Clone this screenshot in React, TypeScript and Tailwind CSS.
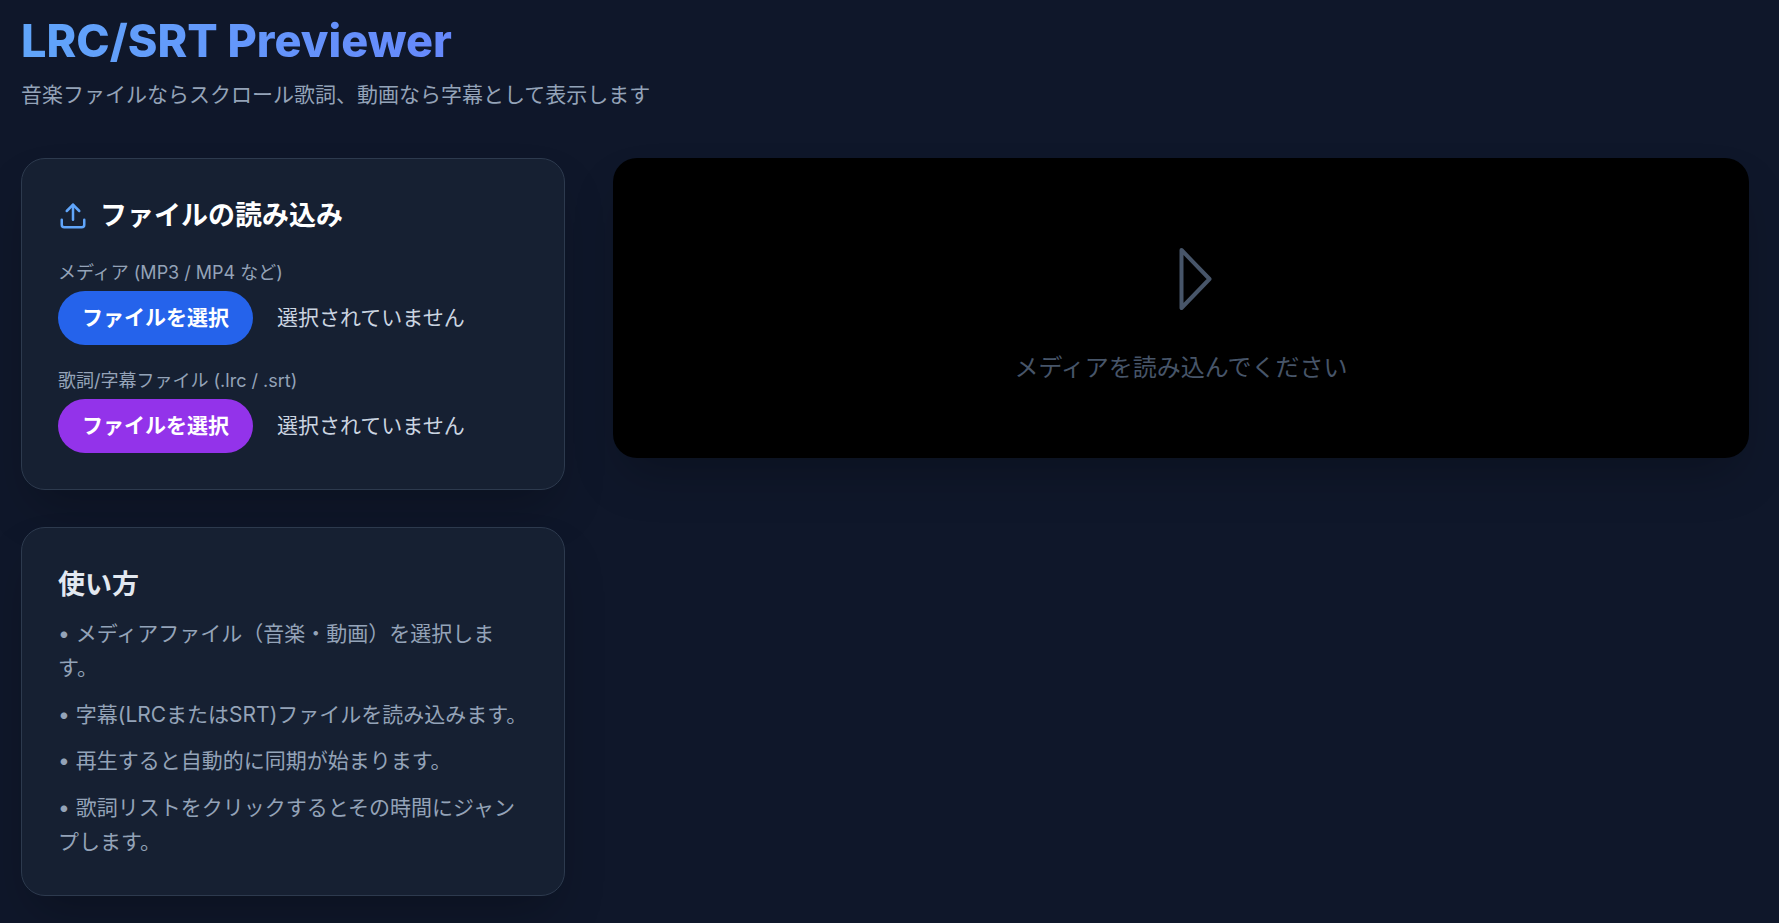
import { Upload } from "lucide-react"

const font = "font-['Inter','Noto_Sans_CJK_JP',sans-serif]"

function FileRow({ label, color }: { label: string; color: string }) {
  return (
    <div className="flex flex-col">
      <label className="text-[18px] leading-[25px] text-[#94a3b8]">{label}</label>
      <div className="mt-[6px] flex items-center gap-[24px]">
        <button className={`h-[54px] w-[195px] rounded-full text-[21px] font-semibold text-white ${color}`}>ファイルを選択</button>
        <span className="text-[21px] text-[#cbd5e1]">選択されていません</span>
      </div>
    </div>
  )
}

const tips = [
  "• メディアファイル（音楽・動画）を選択します。",
  "• 字幕(LRCまたはSRT)ファイルを読み込みます。",
  "• 再生すると自動的に同期が始まります。",
  "• 歌詞リストをクリックするとその時間にジャンプします。",
]

export default function App() {
  return (
    <div className={`min-h-[923px] overflow-hidden bg-[#0f172a] pl-[21px] pr-[30px] pt-[14px] ${font}`}>
      <header className="h-[144px]">
        <h1 className="inline-block bg-gradient-to-r from-[#60a5fa] to-[#6688fb] bg-clip-text text-[45px] font-extrabold leading-[54px] text-transparent">LRC/SRT Previewer</h1>
        <p className="mt-[11px] text-[21px] leading-[32px] text-[#94a3b8]">音楽ファイルならスクロール歌詞、動画なら字幕として表示します</p>
      </header>
      <div className="flex items-start gap-[48px]">
        <div className="flex w-[544px] shrink-0 flex-col gap-[37px]">
          <section className="rounded-[24px] border border-[#2d3a4e] bg-[#162032] px-[36px] pb-[36px] pt-[36px] shadow-2xl">
            <h2 className="flex h-[42px] items-center gap-[12px] text-[27px] font-semibold text-white">
              <Upload className="h-[30px] w-[30px] text-[#60a5fa]" strokeWidth={2} />
              ファイルの読み込み
            </h2>
            <div className="mt-[23px] flex flex-col gap-[23px]">
              <FileRow label="メディア (MP3 / MP4 など)" color="bg-[#2563eb]" />
              <FileRow label="歌詞/字幕ファイル (.lrc / .srt)" color="bg-[#9333ea]" />
            </div>
          </section>
          <section className="rounded-[24px] border border-[#2d3a4e] bg-[#162032] px-[36px] pb-[36px] pt-[37px] shadow-2xl">
            <h2 className="h-[40px] text-[27px] font-semibold leading-[40px] text-[#e2e8f0]">使い方</h2>
            <ul className="mt-[12px] flex flex-col gap-[12.5px] text-[21px] leading-[34px] text-[#94a3b8]">
              {tips.map((t) => (
                <li key={t}>{t}</li>
              ))}
            </ul>
          </section>
        </div>
        <div className="flex h-[300px] flex-1 flex-col items-center justify-center rounded-[24px] bg-black pt-[12px] shadow-2xl">
          <svg className="h-[70px] w-[70px]" viewBox="0 0 70 70" fill="none" stroke="#475569" strokeWidth={4} strokeLinejoin="round" strokeLinecap="round">
            <polygon points="35.5,6 63.5,35 35.5,64" />
          </svg>
          <p className="mt-[38px] text-[24px] leading-[32px] text-[#475569]">メディアを読み込んでください</p>
        </div>
      </div>
    </div>
  )
}
